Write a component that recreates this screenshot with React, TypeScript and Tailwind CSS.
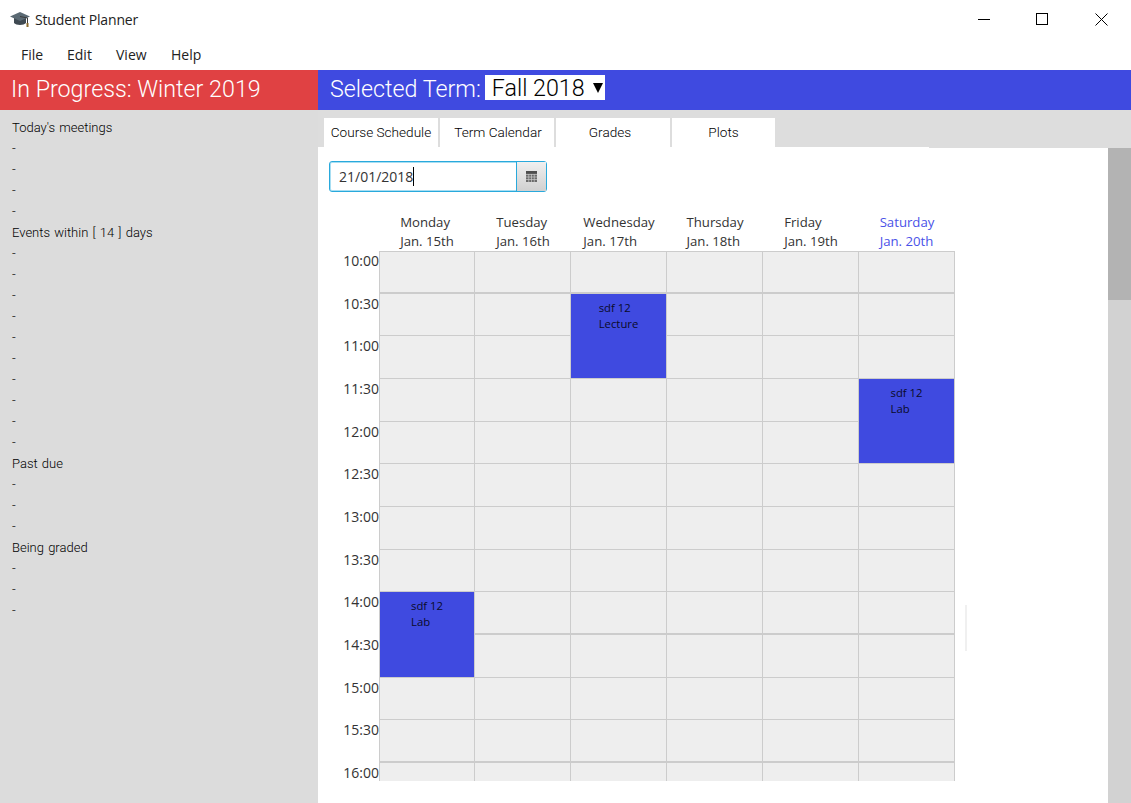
const UI = "font-['Open_Sans',sans-serif]";
const LIGHT = "font-['Roboto',sans-serif] font-light";

const TIMES = ["10:00", "10:30", "11:00", "11:30", "12:00", "12:30", "13:00", "13:30", "14:00", "14:30", "15:00", "15:30", "16:00"];
const THICK_ROWS = [0, 8, 11];
const DAYS = [
  { name: "Monday", date: "Jan. 15th" },
  { name: "Tuesday", date: "Jan. 16th" },
  { name: "Wednesday", date: "Jan. 17th" },
  { name: "Thursday", date: "Jan. 18th" },
  { name: "Friday", date: "Jan. 19th" },
  { name: "Saturday", date: "Jan. 20th", today: true },
];
const TABS = [
  { label: "Course Schedule", className: "w-[114px]" },
  { label: "Term Calendar", className: "w-[114px] pl-[2px]" },
  { label: "Grades", className: "w-[114px] pr-[6px]" },
  { label: "Plots", className: "w-[103px]" },
];
const SIDEBAR = [
  { title: "Today's meetings", rows: 4 },
  { title: "Events within [ 14 ] days", rows: 10 },
  { title: "Past due", rows: 3 },
  { title: "Being graded", rows: 3 },
];
const EVENTS = [
  { row: 1, col: 2, title: "sdf 12", kind: "Lecture" },
  { row: 3, col: 5, title: "sdf 12", kind: "Lab" },
  { row: 8, col: 0, title: "sdf 12", kind: "Lab" },
];

function CapIcon() {
  return (
    <svg width="20" height="17" viewBox="0 0 20 17" className="shrink-0">
      <path d="M4 7v5c2 2.500 10 2.500 12 0V7z" fill="#3f4a52" />
      <path d="M0 5.500 10 1l10 4.500L10 10z" fill="#5b6a74" />
      <path d="M10 5.500 17.500 7v6" fill="none" stroke="#3a3a3a" strokeWidth="1" />
      <rect x="16.500" y="12" width="2" height="4" fill="#8a6a2c" />
    </svg>
  );
}

function CalendarIcon() {
  return (
    <svg width="11" height="11" viewBox="0 0 11 11">
      <rect width="11" height="11" fill="#6a6a6a" />
      <rect width="11" height="2.500" fill="#4d4d4d" />
      <path d="M0 3.500h11M0 6h11M0 8.500h11M2.750 3v8M5.500 3v8M8.250 3v8" stroke="#c8c8c8" strokeWidth="0.7" />
    </svg>
  );
}

function WindowControls() {
  return (
    <div className="ml-auto flex items-center">
      <svg width="12" height="12" viewBox="0 0 12 12" className="mr-[46px]">
        <path d="M0 6.500h12" stroke="#000" strokeWidth="1" />
      </svg>
      <svg width="12" height="12" viewBox="0 0 12 12" className="mr-[47px]">
        <rect x="0.500" y="0.500" width="11" height="11" fill="none" stroke="#000" strokeWidth="1" />
      </svg>
      <svg width="13" height="13" viewBox="0 0 13 13" className="mr-[23px]">
        <path d="M0.500 0.500l12 12M12.500 0.500l-12 12" stroke="#000" strokeWidth="1" />
      </svg>
    </div>
  );
}

export default function App() {
  return (
    <div className={`${UI} flex h-[803px] w-[1131px] flex-col overflow-hidden bg-white text-[#222]`}>
      <div className="flex h-[40px] shrink-0 items-center pb-[2px] pl-[10px]">
        <CapIcon />
        <span className="ml-[5px] text-[14px] tracking-[-0.15px]">Student Planner</span>
        <WindowControls />
      </div>
      <div className="flex h-[30px] shrink-0 items-center pb-[2px] pl-[21px] text-[14px]">
        <span className="w-[46px]">File</span>
        <span className="w-[49px]">Edit</span>
        <span className="w-[55px]">View</span>
        <span>Help</span>
      </div>
      <div className={`${LIGHT} flex h-[40px] shrink-0 text-[23.250px] text-white`}>
        <div className="flex w-[318px] items-center bg-[#e04143] pb-[2px] pl-[11px]">In Progress: Winter 2019</div>
        <div className="flex flex-1 items-center bg-[#3f4ae0] pl-[12px]">
          <span className="pb-[2px]">Selected Term:</span>
          <div className="ml-[4px] mb-[5px] flex h-[25px] w-[120px] items-center whitespace-nowrap bg-white pl-[7px] pt-[1px] text-black">
            <span>Fall 2018</span>
            <span className="ml-[8px] h-0 w-0 border-x-[5.500px] border-t-[10px] border-x-transparent border-t-black" />
          </div>
        </div>
      </div>
      <div className="flex min-h-0 flex-1">
        <aside className={`${LIGHT} w-[318px] shrink-0 bg-[#dcdcdc] pl-[12px] pt-[7px] text-[13px] leading-[21px] text-black [word-spacing:1px]`}>
          {SIDEBAR.map((section) => (
            <div key={section.title}>
              <div>{section.title}</div>
              {Array.from({ length: section.rows }, (_, i) => (
                <div key={i}>-</div>
              ))}
            </div>
          ))}
        </aside>
        <div className="flex min-w-0 flex-1 flex-col bg-[#dddddd]">
          <div className="flex h-[37px] shrink-0 gap-[2px] pl-[6px] pt-[8px]">
            {TABS.map((tab) => (
              <div key={tab.label} className={`${LIGHT} ${tab.className} flex items-center justify-center bg-white text-[13.600px] text-black`}>
                {tab.label}
              </div>
            ))}
          </div>
          <div className="h-px w-[611px] shrink-0 bg-white" />
          <div className="flex min-h-0 flex-1">
            <main className="relative min-w-0 flex-1 bg-white pl-[11px] pt-[13px]">
              <div className="flex h-[31px] w-[218px] rounded-[3px] border border-[#29a9dc] shadow-[0_0_0_1px_#a8def2_inset]">
                <div className="flex flex-1 items-center pl-[9px] text-[14px] text-[#333]">
                  <span>21/01/2018</span>
                  <span className="h-[19px] w-px bg-black" />
                </div>
                <div className="flex w-[30px] items-center justify-center border-l border-[#29a9dc] bg-gradient-to-b from-[#f0f0f0] to-[#d0d0d0]">
                  <CalendarIcon />
                </div>
              </div>
              <div className="mt-[21px] grid grid-cols-[50px_repeat(6,96px)] text-[13.200px] leading-[19px]">
                <div />
                {DAYS.map((day) => (
                  <div key={day.name} className={`flex h-[38px] justify-center ${day.today ? "text-[#4a52e8]" : "text-[#333]"}`}>
                    <div>
                      <div>{day.name}</div>
                      <div>{day.date}</div>
                    </div>
                  </div>
                ))}
              </div>
              <div className="grid h-[530px] grid-cols-[50px_repeat(6,96px)] auto-rows-[42.660px] overflow-hidden">
                {TIMES.map((time, row) => (
                  <div key={time} className="contents">
                    <div className="text-right text-[14px] leading-[20px] text-[#333]">{time}</div>
                    {DAYS.map((day, col) => {
                      const event = EVENTS.find((e) => e.row === row && e.col === col);
                      return (
                        <div
                          key={day.name}
                          className={`relative border-r border-[#cccccc] bg-[#eeeeee] ${THICK_ROWS.includes(row) ? "border-b-2" : "border-b"} ${col === 0 ? "border-l" : ""} ${row === 0 ? "border-t" : ""}`}
                        >
                          {event && (
                            <div className="absolute left-0 top-0 z-10 flex h-[84.500px] w-full justify-center bg-[#3f4ae0] pt-[6px] text-[11.300px] leading-[16px] text-[#0a0a2a]">
                              <div>
                                <div>{event.title}</div>
                                <div>{event.kind}</div>
                              </div>
                            </div>
                          )}
                        </div>
                      );
                    })}
                  </div>
                ))}
              </div>
              <div className="absolute left-[647px] top-[457px] h-[46px] w-[2px] bg-[#f0f0f0]" />
            </main>
            <div className="w-[23px] shrink-0 bg-[#d2d2d2]">
              <div className="h-[152px] bg-[#b3b3b3]" />
            </div>
          </div>
        </div>
      </div>
    </div>
  );
}
